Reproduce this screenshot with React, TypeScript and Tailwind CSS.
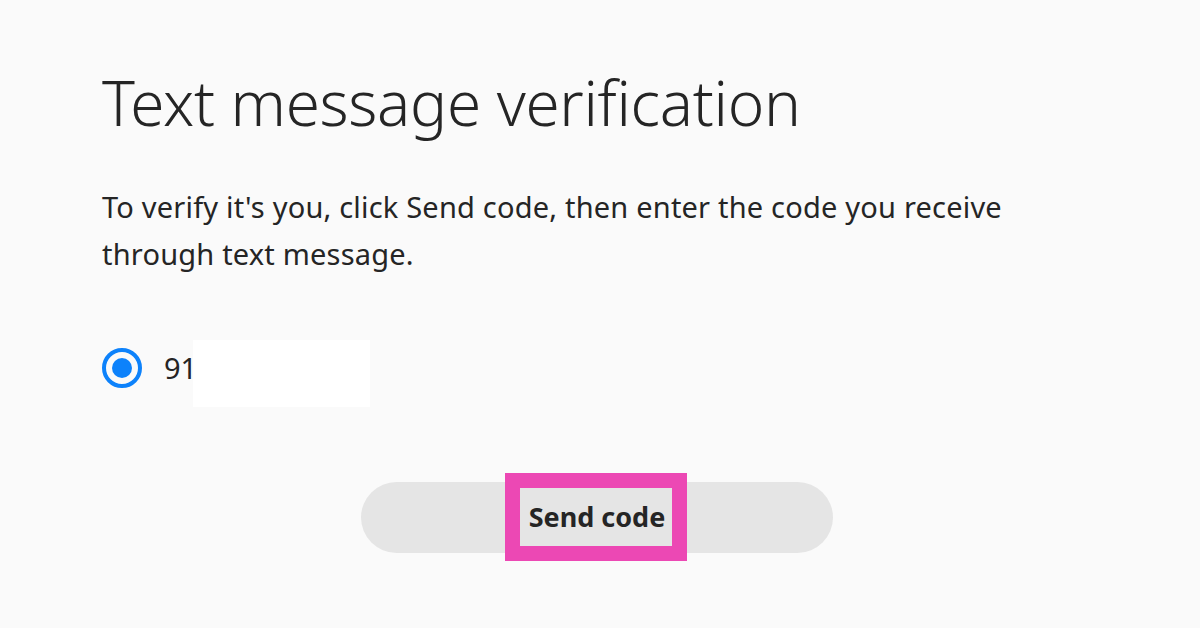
import React from 'react';

export default function App() {
  return (
    <div
      className="w-[1200px] h-[628px] bg-[#fafafa] text-[#252525] overflow-hidden"
      style={{ fontFamily: '"Noto Sans", "Open Sans", sans-serif' }}
    >
      <div className="pl-[102px] pt-[62px]">
        <h1 className="text-[62px] font-light leading-[80px] tracking-[-0.3px]">Text message verification</h1>
        <p className="mt-[41px] w-[940px] text-[29px] leading-[47px] tracking-[0.2px]">
          To verify it's you, click Send code, then enter the code you receive through text message.
        </p>
        <label className="mt-[63px] flex items-start h-[67px]">
          <span className="mt-[8px] w-[40px] h-[40px] rounded-full border-[4px] border-[#0d82fb] flex items-center justify-center">
            <span className="w-[20px] h-[20px] rounded-full bg-[#0d82fb]" />
          </span>
          <span className="ml-[22px] mt-[12px] text-[29px] leading-[32px]">91</span>
          <span className="ml-[-4px] w-[177px] h-[67px] bg-white" />
        </label>
      </div>
      <div className="mt-[75px] flex justify-center">
        <div className="relative ml-[-6px]">
          <button className="w-[472px] h-[71px] rounded-full bg-[#e5e5e5] text-[27px] font-bold text-[#252525]">
            Send code
          </button>
          <div className="absolute left-[144px] top-[-9px] w-[182px] h-[88px] border-[15px] border-[#ec48b4]" />
        </div>
      </div>
    </div>
  );
}
